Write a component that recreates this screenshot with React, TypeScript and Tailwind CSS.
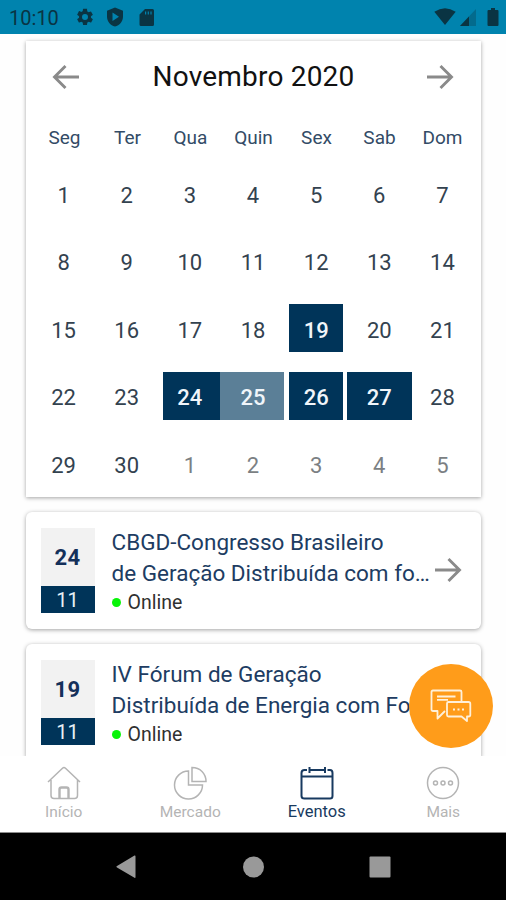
import type { ReactNode } from "react";

const weekdays = ["Seg", "Ter", "Qua", "Quin", "Sex", "Sab", "Dom"];

const highlights: Record<number, string> = {
  19: "ml-[4px] mr-[5px] bg-[#003459]",
  24: "ml-[5px] mr-px bg-[#003459]",
  25: "-ml-px mr-px bg-[#5b7f97]",
  26: "ml-[4px] mr-[5px] bg-[#003459]",
  27: "-ml-[1px] -mr-px bg-[#003459]",
};

const days = Array.from({ length: 35 }, (_, i) => ({
  value: i < 30 ? i + 1 : i - 29,
  outside: i >= 30,
}));

function Arrow({ left = false }: { left?: boolean }) {
  return (
    <svg
      width="28"
      height="26"
      viewBox="0 0 28 26"
      fill="none"
      stroke="#8a8a8a"
      strokeWidth="2.9"
      className={left ? "rotate-180" : ""}
    >
      <path d="M1 13H25M14.500 2L25.500 13L14.500 24" />
    </svg>
  );
}

function StatusBar() {
  return (
    <header className="flex h-[34px] shrink-0 items-center bg-[#0083ae] pl-[9px] pr-[7px] text-[#0a3443]">
      <span className="mt-[2px] w-[66px] text-[20px] leading-[34px]">10:10</span>
      <svg width="20" height="20" viewBox="0 0 24 24" fill="currentColor">
        <path d="M19.14 12.94c.04-.3.06-.61.06-.94s-.02-.64-.07-.94l2.03-1.58a.49.49 0 0 0 .12-.61l-1.92-3.32a.49.49 0 0 0-.59-.22l-2.39.96a7 7 0 0 0-1.62-.94l-.36-2.54A.48.48 0 0 0 13.92 2h-3.84a.48.48 0 0 0-.47.41l-.36 2.54c-.59.24-1.13.57-1.62.94l-2.39-.96a.48.48 0 0 0-.59.22L2.74 8.87a.48.48 0 0 0 .12.61l2.03 1.58a6 6 0 0 0 0 1.88l-2.03 1.58a.49.49 0 0 0-.12.61l1.92 3.32c.12.22.37.29.59.22l2.39-.96c.5.38 1.03.7 1.62.94l.36 2.54c.05.24.24.41.48.41h3.84c.24 0 .44-.17.47-.41l.36-2.54c.59-.24 1.13-.56 1.62-.94l2.39.96c.22.08.47 0 .59-.22l1.92-3.32a.48.48 0 0 0-.12-.61zM12 15.6a3.6 3.6 0 1 1 0-7.2 3.6 3.6 0 0 1 0 7.2z" />
      </svg>
      <svg width="18" height="20" viewBox="0 0 18 20" fill="currentColor" fillRule="evenodd" className="ml-[11px]">
        <path d="M9 .5L17 3.700V9.500C17 14.500 13.600 18.300 9 19.500C4.400 18.300 1 14.500 1 9.500V3.700ZM6.500 5.500V14L13 9.700Z" />
      </svg>
      <svg width="16" height="19" viewBox="0 0 16 19" fill="currentColor" fillRule="evenodd" className="ml-[15px]">
        <path d="M6 1H13.500Q15 1 15 2.500V16.500Q15 18 13.500 18H2Q.5 18 .5 16.500V6.500ZM6 3.500V6.500H7.200V3.500ZM8.700 3.500V6.500H9.900V3.500ZM11.400 3.500V6.500H12.600V3.500Z" />
      </svg>
      <svg width="22" height="18" viewBox="0 0 22 18" fill="currentColor" className="ml-auto">
        <path d="M.3 3.800Q11-3.200 21.700 3.800L11 17Z" />
      </svg>
      <svg width="16" height="17" viewBox="0 0 16 17" fill="currentColor" className="ml-1">
        <path d="M0 17L16 0V17Z" opacity=".3" />
        <path d="M0 17L9 7.500V17Z" />
      </svg>
      <svg width="12" height="20" viewBox="0 0 12 20" fill="currentColor" className="ml-[11px]">
        <path d="M4 1H8V3H10.500Q11.500 3 11.500 4V18Q11.500 19 10.500 19H1.500Q.5 19 .5 18V4Q.5 3 1.500 3H4Z" />
      </svg>
    </header>
  );
}

function Calendar() {
  return (
    <section className="mx-auto h-[456px] w-[455px] shrink-0 bg-white px-[6.500px] shadow-[0_1px_4px_rgba(0,0,0,0.36)]">
      <div className="flex h-[71px] items-center justify-between px-5">
        <Arrow left />
        <h1 className="pl-px text-[28px] leading-[71px] tracking-[0.2px] text-[#111]">Novembro 2020</h1>
        <Arrow />
      </div>
      <div className="grid h-[50px] grid-cols-7 pl-px text-center text-[19px] leading-[52px] text-[#334b66]">
        {weekdays.map((d) => (
          <span key={d}>{d}</span>
        ))}
      </div>
      <div className="grid auto-rows-[67.5px] grid-cols-7">
        {days.map(({ value, outside }, i) => {
          const mark = outside ? undefined : highlights[value];
          return (
            <div key={i} className="grid grid-cols-1 grid-rows-1 items-center">
              {mark && <span className={`col-start-1 row-start-1 mb-[5px] h-12 ${mark}`} />}
              <span
                className={`col-start-1 row-start-1 text-center text-[22px] leading-7 ${
                  mark ? "z-10 font-medium text-[#f0f5fa]" : outside ? "text-[#7b7f83]" : "text-[#33424f]"
                }`}
              >
                {value}
              </span>
            </div>
          );
        })}
      </div>
    </section>
  );
}

function EventCard({ day, lines, arrow }: { day: string; lines: string[]; arrow?: boolean }) {
  return (
    <article className="mx-auto flex h-[117px] w-[455px] shrink-0 rounded-[6px] bg-white pl-[15px] pt-[16px] shadow-[0_1px_4px_rgba(0,0,0,0.36)]">
      <div className="h-[85px] w-[54px] shrink-0 text-center">
        <div className="h-[58px] bg-[#f2f2f2] text-[22px] font-bold leading-[60px] tracking-[0.3px] text-[#14305a]">
          {day}
        </div>
        <div className="h-[27px] bg-[#003459] text-[20px] leading-[29px] text-[#e8f0f6]">11</div>
      </div>
      <div className="-mt-px ml-[17px] w-[320px] shrink-0 whitespace-nowrap text-[22.500px] leading-[31px] text-[#203c62]">
        <p>{lines[0]}</p>
        <p>{lines[1]}</p>
        <p className="flex items-center text-[19.500px] leading-[27px] text-[#303030]">
          <span className="mr-[7px] h-[9px] w-[9px] rounded-full bg-[#08f408]" />
          Online
        </p>
      </div>
      {arrow && (
        <div className="mt-[29px] ml-[2px]">
          <Arrow />
        </div>
      )}
    </article>
  );
}

function Tab({ label, active, children }: { label: string; active?: boolean; children: ReactNode }) {
  return (
    <div
      className={`flex flex-1 flex-col items-center pl-px pt-[10px] leading-5 ${
        active ? "text-[16.500px] text-[#183a60]" : "text-[15.500px] text-[#b4b4b4]"
      }`}
    >
      <svg width="34" height="34" viewBox="0 0 34 34" fill="none" stroke="currentColor" strokeWidth="1.500">
        {children}
      </svg>
      <span className="mt-[2px]">{label}</span>
    </div>
  );
}

export default function App() {
  return (
    <div className="relative flex h-[900px] w-[506px] flex-col overflow-hidden bg-white font-[Roboto,sans-serif]">
      <StatusBar />
      <main className="flex h-[722px] shrink-0 flex-col gap-[15px] overflow-hidden bg-[#fefefe] pt-[7px]">
        <Calendar />
        <EventCard day="24" lines={["CBGD-Congresso Brasileiro", "de Geração Distribuída com fo…"]} arrow />
        <EventCard day="19" lines={["IV Fórum de Geração", "Distribuída de Energia com Fo"]} />
      </main>
      <nav className="flex h-[77px] shrink-0 border-b border-[#8c8c8c] bg-white">
        <Tab label="Início">
          <path d="M4 14V29.500Q4 32.500 7 32.500H27.500Q30.500 32.500 30.500 29.500V14M1 16L15.500 2.200Q17 .8 18.500 2.200L33 16" />
          <path d="M12.500 32V23.500Q12.500 21.500 14.500 21.500H19.500Q21.500 21.500 21.500 23.500V32" strokeWidth="2.4" />
        </Tab>
        <Tab label="Mercado">
          <path d="M15.500 5A14 14 0 1 0 29.500 19H15.500ZM19 1.500V15.500H33C33 7.500 27 1.500 19 1.500Z" />
        </Tab>
        <Tab label="Eventos" active>
          <path
            strokeWidth="2"
            d="M7 4H4.500Q1.500 4 1.500 7V30Q1.500 32.500 4.500 32.500H30Q32.500 32.500 32.500 30V7Q32.500 4 30 4H27.500M9.500 4H25M1.500 10.500H32.500M9.500 1V7M25 1V7"
          />
        </Tab>
        <Tab label="Mais">
          <circle cx="17" cy="17" r="15.500" />
          <circle cx="9.500" cy="17" r="2" />
          <circle cx="17" cy="17" r="2" />
          <circle cx="24.500" cy="17" r="2" />
        </Tab>
      </nav>
      <footer className="flex h-[67px] shrink-0 items-center justify-center bg-black">
        <svg width="506" height="67" viewBox="0 0 506 67" fill="#999">
          <path d="M117 33L134.500 22.500Q135.500 22 135.500 23.500V44Q135.500 45.500 134.500 44.800L117 34.500Q115.500 33.700 117 33Z" />
          <circle cx="253.500" cy="34" r="10.500" />
          <rect x="369.500" y="23.500" width="21" height="21" rx="1" />
        </svg>
      </footer>
      <button className="absolute left-[409px] top-[664px] flex h-[84px] w-[84px] items-center justify-center rounded-full bg-[#ff9c1a]">
        <svg width="42" height="34" viewBox="0 0 42 34" fill="none" stroke="#fff0d9" strokeWidth="1.800" strokeLinejoin="round">
          <path d="M15 22L7.500 29.500V22H3Q1.500 22 1.500 20.500V3Q1.500 1.500 3 1.500H30Q31.500 1.500 31.500 3V12M7 7.500H25.500M7 10.800H18" />
          <path d="M18.500 13H38.500Q40.300 13 40.300 14.800V26Q40.300 27.500 38.500 27.500H37V32L31.500 27.500H18.500Q17 27.500 17 26V14.500Q17 13 18.500 13Z" />
          <path strokeWidth="2.200" d="M23 20.500H25M27.500 20.500H29.500M32 20.500H34" />
        </svg>
      </button>
    </div>
  );
}
